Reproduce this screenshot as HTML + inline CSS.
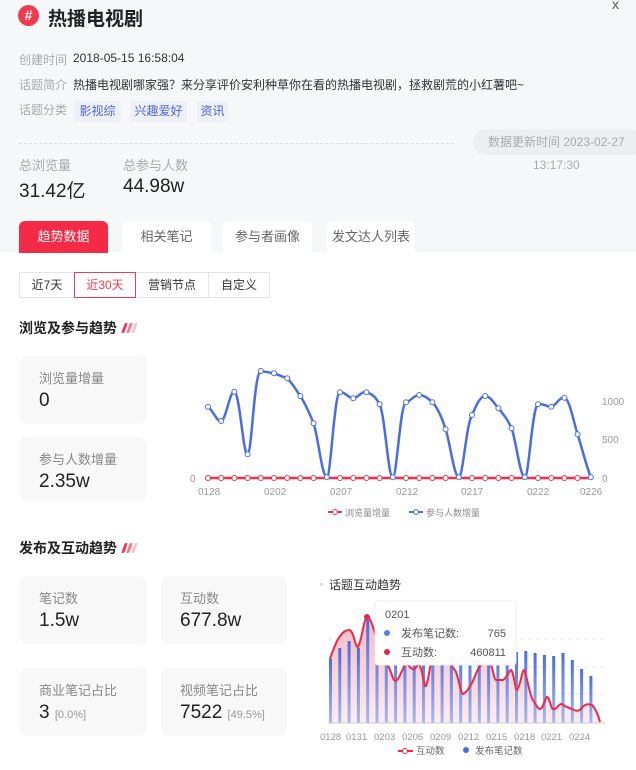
<!DOCTYPE html>
<html><head><meta charset="utf-8"><style>
*{margin:0;padding:0;box-sizing:border-box}
body{width:636px;height:770px;overflow:hidden;background:#fff;font-family:"Liberation Sans","Noto Sans CJK SC",sans-serif;position:relative;color:#333}
.a{position:absolute;white-space:nowrap}
.top{position:absolute;left:0;top:0;width:636px;height:252px;background:#f6f7f8}
.lbl{color:#aaa;font-size:12px}
.val{color:#333;font-size:12px}
.tag{position:absolute;top:101px;height:21px;line-height:21px;text-align:center;background:#eef0f7;color:#4b66d8;font-size:12px;border-radius:3px}
.tab{position:absolute;top:221px;height:32px;line-height:32px;text-align:center;background:#fff;color:#666;font-size:13px;border-radius:6px 6px 0 0}
.seg{position:absolute;top:272px;height:26px;line-height:24px;text-align:center;font-size:12px;border:1px solid #e3e3e3;background:#fff;color:#333}
.card{position:absolute;background:#f8f8f8;border-radius:8px}
.card .t{position:absolute;left:19px;top:12px;font-size:13px;color:#888}
.card .v{position:absolute;left:19px;top:34px;font-size:19px;color:#222}
.h{font-size:14px;font-weight:bold;color:#222}
.sl{display:inline-block;width:3px;height:10px;margin-left:2px;transform:skewX(-20deg);border-radius:1px}
</style></head><body>
<div class="top"></div>
<div class="a" style="left:18px;top:5px;width:21px;height:21px;border-radius:50%;background:#f03a4f;color:#fff;font-weight:bold;font-size:14px;text-align:center;line-height:21px">#</div>
<div class="a" style="left:48px;top:4px;font-size:19px;font-weight:bold;color:#222">热播电视剧</div>
<div class="a" style="left:612px;top:-4px;font-size:14px;color:#555">x</div>
<div class="a lbl" style="left:19px;top:51px">创建时间</div><div class="a val" style="left:73px;top:51px">2018-05-15 16:58:04</div>
<div class="a lbl" style="left:19px;top:76px">话题简介</div><div class="a val" style="left:73px;top:76px">热播电视剧哪家强？来分享评价安利种草你在看的热播电视剧，拯救剧荒的小红薯吧~</div>
<div class="a lbl" style="left:19px;top:101px">话题分类</div>
<div class="tag" style="left:74px;width:47px">影视综</div><div class="tag" style="left:130px;width:57px">兴趣爱好</div><div class="tag" style="left:197px;width:31px">资讯</div>
<div class="a" style="left:19px;top:143px;width:435px;border-top:1px dashed #ddd"></div>
<div class="a" style="left:473px;top:129px;width:170px;height:26px;border-radius:13px;background:#eceef0;color:#aaa;font-size:12px;line-height:26px;padding-left:15px">数据更新时间 2023-02-27</div>
<div class="a" style="left:533px;top:158px;color:#aaa;font-size:12px">13:17:30</div>
<div class="a lbl" style="left:19px;top:155px;font-size:13px">总浏览量</div><div class="a lbl" style="left:123px;top:155px;font-size:13px">总参与人数</div>
<div class="a" style="left:19px;top:176px;font-size:19px;color:#222">31.42亿</div><div class="a" style="left:123px;top:176px;font-size:19px;color:#222">44.98w</div>
<div class="tab" style="left:19px;width:89px;background:#f52a47;color:#fff">趋势数据</div>
<div class="tab" style="left:122px;width:89px">相关笔记</div>
<div class="tab" style="left:223px;width:89px">参与者画像</div>
<div class="tab" style="left:327px;width:88px">发文达人列表</div>
<div class="seg" style="left:19px;width:56px">近7天</div>
<div class="seg" style="left:74px;width:62px;border-color:#e0405a;color:#f03a4f;z-index:2">近30天</div>
<div class="seg" style="left:135px;width:74px">营销节点</div>
<div class="seg" style="left:208px;width:62px">自定义</div>
<div class="a h" style="left:19px;top:318px">浏览及参与趋势 <span class="sl" style="background:#f03a4f"></span><span class="sl" style="background:#f5788a"></span><span class="sl" style="background:#f9c2cb"></span></div>
<div class="card" style="left:20px;top:356px;width:127px;height:68px"><div class="t">浏览量增量</div><div class="v">0</div></div>
<div class="card" style="left:20px;top:437px;width:127px;height:64px"><div class="t">参与人数增量</div><div class="v">2.35w</div></div>
<svg class="a" style="left:0;top:0" width="636" height="770">
<defs><linearGradient id="bg" x1="0" y1="0" x2="0" y2="1"><stop offset="0" stop-color="#4a6de0"/><stop offset="1" stop-color="#a9b8f0"/></linearGradient>
<linearGradient id="pg" x1="0" y1="0" x2="0" y2="1"><stop offset="0" stop-color="#f3a9b6"/><stop offset="1" stop-color="#fde8ec"/></linearGradient></defs>
<g font-size="10" fill="#999" font-family="Liberation Sans">
<text x="190" y="482">0</text><text x="602" y="405">1000</text><text x="602" y="443">500</text><text x="602" y="482">0</text>
<text x="198" y="495">0128</text><text x="264" y="495">0202</text><text x="330" y="495">0207</text><text x="396" y="495">0212</text><text x="461" y="495">0217</text><text x="527" y="495">0222</text><text x="580" y="495">0226</text>
</g>
<line x1="208" y1="478" x2="591" y2="478" stroke="#f0304c" stroke-width="2.5"/>
<g fill="#fff" stroke="#f0304c" stroke-width="1">
<circle cx="208" cy="478" r="2.5"/><circle cx="221.2" cy="478" r="2.5"/><circle cx="234.4" cy="478" r="2.5"/><circle cx="247.6" cy="478" r="2.5"/><circle cx="260.8" cy="478" r="2.5"/><circle cx="274" cy="478" r="2.5"/><circle cx="287.2" cy="478" r="2.5"/><circle cx="300.4" cy="478" r="2.5"/><circle cx="313.6" cy="478" r="2.5"/><circle cx="340" cy="478" r="2.5"/><circle cx="353.2" cy="478" r="2.5"/><circle cx="366.4" cy="478" r="2.5"/><circle cx="379.6" cy="478" r="2.5"/><circle cx="406" cy="478" r="2.5"/><circle cx="419.2" cy="478" r="2.5"/><circle cx="432.4" cy="478" r="2.5"/><circle cx="445.6" cy="478" r="2.5"/><circle cx="472" cy="478" r="2.5"/><circle cx="485.2" cy="478" r="2.5"/><circle cx="498.4" cy="478" r="2.5"/><circle cx="511.6" cy="478" r="2.5"/><circle cx="538" cy="478" r="2.5"/><circle cx="551.2" cy="478" r="2.5"/><circle cx="564.4" cy="478" r="2.5"/><circle cx="577.6" cy="478" r="2.5"/>
</g>
<path fill="none" stroke="#4a6de0" stroke-width="2.5" stroke-linejoin="round" d="M208,406.7 C214,412 217,422 221.2,421 C226,420 230,390 234.4,391.7 C240,394 243,455 247.6,454.3 C252,453 254,372 260.8,371 L274,373.3 L287.2,378.3 C293,384 296,390 300.4,396 C306,405 309,412 313.6,423.3 C318,436 322,477 326.8,477.3 C331,477 334,393 340,392.3 C346,392 348,398 353.2,398.3 C358,398 361,391 366.4,392.3 C372,394 375,396 379.6,404.3 C385,415 388,477 392.8,477.3 C397,477 400,404 406,402.3 C411,401 414,395 419.2,395 C424,395 428,398 432.4,402.3 C438,408 442,418 445.6,429.3 C450,442 454,477 458.8,477.3 C463,477 466,426 472,415 C476,406 480,396 485.2,396 C490,396 494,403 498.4,408.3 C504,415 508,420 511.6,428.3 C516,440 520,477 524.8,477.3 C529,477 532,407 538,404.3 C543,403 547,407 551.2,406.7 C556,406 560,396 564.4,397.7 C570,400 573,420 577.6,434.3 C582,448 586,465 590.8,477.3"/>
<g fill="#fff" stroke="#4a6de0" stroke-width="1">
<circle cx="208" cy="406.7" r="2.5"/><circle cx="221.2" cy="421" r="2.5"/><circle cx="234.4" cy="391.7" r="2.5"/><circle cx="247.6" cy="454.3" r="2.5"/><circle cx="260.8" cy="371" r="2.5"/><circle cx="274" cy="373.3" r="2.5"/><circle cx="287.2" cy="378.3" r="2.5"/><circle cx="300.4" cy="396" r="2.5"/><circle cx="313.6" cy="423.3" r="2.5"/><circle cx="326.8" cy="477.3" r="2.5"/><circle cx="340" cy="392.3" r="2.5"/><circle cx="353.2" cy="398.3" r="2.5"/><circle cx="366.4" cy="392.3" r="2.5"/><circle cx="379.6" cy="404.3" r="2.5"/><circle cx="392.8" cy="477.3" r="2.5"/><circle cx="406" cy="402.3" r="2.5"/><circle cx="419.2" cy="395" r="2.5"/><circle cx="432.4" cy="402.3" r="2.5"/><circle cx="445.6" cy="429.3" r="2.5"/><circle cx="458.8" cy="477.3" r="2.5"/><circle cx="472" cy="415" r="2.5"/><circle cx="485.2" cy="396" r="2.5"/><circle cx="498.4" cy="408.3" r="2.5"/><circle cx="511.6" cy="428.3" r="2.5"/><circle cx="524.8" cy="477.3" r="2.5"/><circle cx="538" cy="404.3" r="2.5"/><circle cx="551.2" cy="406.7" r="2.5"/><circle cx="564.4" cy="397.7" r="2.5"/><circle cx="577.6" cy="434.3" r="2.5"/><circle cx="590.8" cy="477.3" r="2.5"/>
</g>
<line x1="328" y1="512" x2="342" y2="512" stroke="#f0304c" stroke-width="2"/><circle cx="335" cy="512" r="2.5" fill="#fff" stroke="#f0304c"/>
<text x="345" y="516" font-size="9" fill="#888">浏览量增量</text>
<line x1="409" y1="512" x2="423" y2="512" stroke="#4a6de0" stroke-width="2"/><circle cx="416" cy="512" r="2.5" fill="#fff" stroke="#4a6de0"/>
<text x="426" y="516" font-size="9" fill="#888">参与人数增量</text>

<!-- chart 2 -->
<rect x="320" y="583" width="3" height="3" fill="#ddd"/>
<text x="329" y="589" font-size="12" fill="#333">话题互动趋势</text>
<g stroke="#e4e4e4" stroke-dasharray="4,4"><line x1="328" y1="639" x2="605" y2="639"/><line x1="328" y1="667" x2="605" y2="667"/><line x1="328" y1="694" x2="605" y2="694"/></g>
<path d="M330,659 C336,640 342,630 349,630 C354,630 355,648 358,647 C362,640 364,617 367,617 C372,617 376,640 380,650 L386,660 L392,675 L398,681 L405,664 L414,669 L420,666 L426,686 L433,660 L442,650 L448,660 L456,672 L463,694 L472,683 L480,666 L488,660 L496,680 L503,680 L511,670 L517,690 L524,670 L533,700 L540,709 L547,697 L553,709 L561,704 L567,707 C573,709 577,713 581,709 C585,703 589,704 592,705 C595,708 598,714 600,722 L600,723 L330,723Z" fill="url(#pg)" opacity="0.8"/>
<g fill="url(#bg)">
<rect x="329" y="659" width="3" height="64"/><rect x="338.3" y="648" width="3" height="75"/><rect x="347.6" y="641" width="3" height="82"/><rect x="356.9" y="648" width="3" height="75"/><rect x="366.2" y="620" width="3" height="103"/><rect x="375.5" y="636" width="3" height="87"/><rect x="384.8" y="640" width="3" height="83"/><rect x="394.1" y="644" width="3" height="79"/><rect x="403.4" y="646" width="3" height="77"/><rect x="412.7" y="650" width="3" height="73"/><rect x="422" y="648" width="3" height="75"/><rect x="431.3" y="646" width="3" height="77"/><rect x="440.6" y="648" width="3" height="75"/><rect x="449.9" y="650" width="3" height="73"/><rect x="459.2" y="650" width="3" height="73"/><rect x="468.5" y="652" width="3" height="71"/><rect x="477.8" y="652" width="3" height="71"/><rect x="487.1" y="654" width="3" height="69"/><rect x="496.4" y="652" width="3" height="71"/><rect x="505.7" y="650" width="3" height="73"/><rect x="515" y="652" width="3" height="71"/><rect x="524.3" y="651" width="3" height="72"/><rect x="533.6" y="653" width="3" height="70"/><rect x="542.9" y="655" width="3" height="68"/><rect x="552.2" y="656" width="3" height="67"/><rect x="561.5" y="653" width="3" height="70"/><rect x="570.8" y="660" width="3" height="63"/><rect x="580.1" y="669" width="3" height="54"/><rect x="589.4" y="676" width="3" height="47"/>
</g>
<path d="M330,659 C336,640 342,630 349,630 C354,630 355,648 358,647 C362,640 364,617 367,617 C372,617 376,640 380,650 L386,660 L392,675 C395,686 398,681 405,664 C408,662 410,670 414,669 C417,668 418,662 420,666 C423,672 424,688 426,686 C429,680 430,660 433,660 L442,650 L448,660 L456,672 C459,680 461,694 463,694 C467,692 469,688 472,683 C475,676 478,668 480,666 C484,664 486,660 488,660 C492,662 494,680 496,680 C499,680 501,680 503,680 C507,678 509,670 511,670 C514,672 515,690 517,690 C520,688 522,670 524,670 C527,675 530,697 533,700 C536,705 538,709 540,709 C544,708 545,697 547,697 C550,698 551,709 553,709 C556,710 559,704 561,704 C564,704 565,707 567,707 C573,709 577,713 581,709 C585,703 589,704 592,705 C595,708 598,714 600,722" fill="none" stroke="#ec2a47" stroke-width="2"/>
<circle cx="367" cy="617" r="3" fill="#e0284a"/>
<line x1="328" y1="723" x2="605" y2="723" stroke="#ccc"/>
<g font-size="9.5" fill="#999">
<text x="320" y="740">0128</text><text x="346" y="740">0131</text><text x="374" y="740">0203</text><text x="402" y="740">0206</text><text x="430" y="740">0209</text><text x="458" y="740">0212</text><text x="486" y="740">0215</text><text x="514" y="740">0218</text><text x="541" y="740">0221</text><text x="569" y="740">0224</text>
</g>
<line x1="398" y1="751" x2="413" y2="751" stroke="#ec2a47" stroke-width="2"/><circle cx="405" cy="751" r="2.5" fill="#fff" stroke="#ec2a47"/>
<text x="416" y="754" font-size="9.5" fill="#666">互动数</text>
<circle cx="466" cy="750" r="3" fill="#4a6de0"/>
<text x="475" y="754" font-size="9.5" fill="#666">发布笔记数</text>
<rect x="375" y="601" width="141" height="64" rx="3" fill="#fff" stroke="#eee"/>
<text x="385" y="618" font-size="11" fill="#555">0201</text>
<circle cx="387" cy="633" r="3" fill="#5b7be9"/><text x="401" y="637" font-size="11" fill="#555">发布笔记数:</text><text x="506" y="637" font-size="11" fill="#555" text-anchor="end">765</text>
<circle cx="387" cy="652" r="3" fill="#e0284a"/><text x="401" y="656" font-size="11" fill="#555">互动数:</text><text x="506" y="656" font-size="11" fill="#555" text-anchor="end">460811</text>
</svg>
<div class="a h" style="left:19px;top:538px">发布及互动趋势 <span class="sl" style="background:#f03a4f"></span><span class="sl" style="background:#f5788a"></span><span class="sl" style="background:#f9c2cb"></span></div>
<div class="card" style="left:20px;top:576px;width:127px;height:68px"><div class="t">笔记数</div><div class="v">1.5w</div></div>
<div class="card" style="left:161px;top:576px;width:126px;height:68px"><div class="t">互动数</div><div class="v">677.8w</div></div>
<div class="card" style="left:20px;top:668px;width:127px;height:68px"><div class="t">商业笔记占比</div><div class="v">3 <span style="font-size:11px;color:#999">[0.0%]</span></div></div>
<div class="card" style="left:161px;top:668px;width:126px;height:68px"><div class="t">视频笔记占比</div><div class="v">7522 <span style="font-size:11px;color:#999">[49.5%]</span></div></div>
</body></html>
